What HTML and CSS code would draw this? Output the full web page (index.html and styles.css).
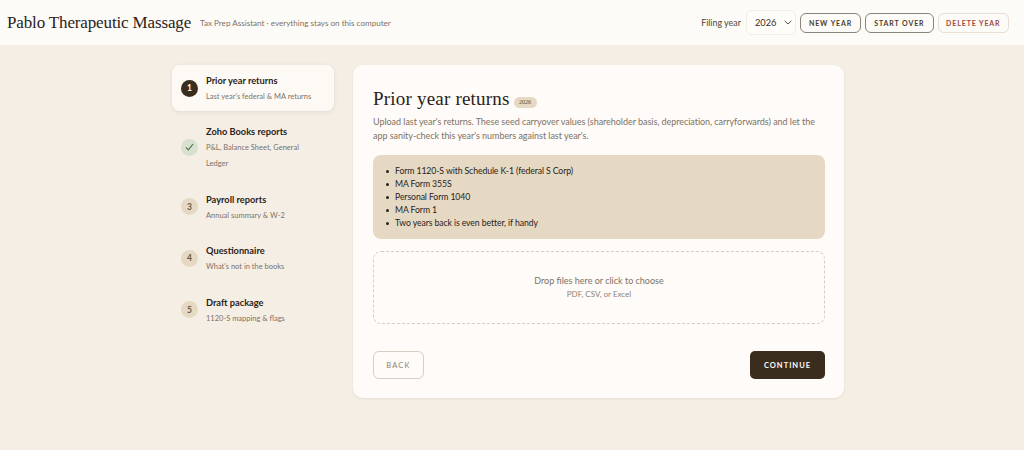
FILE: index.html
```html
<!DOCTYPE html>
<html>
<head>
    <title>Pablo Therapeutic Massage</title>
    <link rel="stylesheet" href="styles.css">
</head>
<body>
    <header class="topbar">
        <div class="brand">
            <span class="brand-name">Pablo Therapeutic Massage</span>
            <span class="brand-sub">Tax Prep Assistant · everything stays on this computer</span>
        </div>
        <div class="year-tools">
            <label class="year-label">Filing year</label>
            <div class="year-select">
                <span>2026</span>
                <svg width="8" height="5" viewBox="0 0 8 5"><path d="M0.7 0.8 L4 4 L7.3 0.8" fill="none" stroke="#5c5247" stroke-width="1"/></svg>
            </div>
            <button class="tool-btn">NEW YEAR</button>
            <button class="tool-btn">START OVER</button>
            <button class="tool-btn danger">DELETE YEAR</button>
        </div>
    </header>

    <main class="layout">
        <nav class="steps">
            <div class="step active">
                <span class="dot current">1</span>
                <div class="step-text">
                    <div class="step-title">Prior year returns</div>
                    <div class="step-sub">Last year's federal &amp; MA returns</div>
                </div>
            </div>
            <div class="step">
                <span class="dot done">
                    <svg width="9" height="8" viewBox="0 0 9 8"><path d="M1 4.4 L3.4 6.8 L8 1" fill="none" stroke="#4f6b4a" stroke-width="1.1"/></svg>
                </span>
                <div class="step-text">
                    <div class="step-title">Zoho Books reports</div>
                    <div class="step-sub">P&amp;L, Balance Sheet, General Ledger</div>
                </div>
            </div>
            <div class="step">
                <span class="dot">3</span>
                <div class="step-text">
                    <div class="step-title">Payroll reports</div>
                    <div class="step-sub">Annual summary &amp; W-2</div>
                </div>
            </div>
            <div class="step">
                <span class="dot">4</span>
                <div class="step-text">
                    <div class="step-title">Questionnaire</div>
                    <div class="step-sub">What's not in the books</div>
                </div>
            </div>
            <div class="step">
                <span class="dot">5</span>
                <div class="step-text">
                    <div class="step-title">Draft package</div>
                    <div class="step-sub">1120-S mapping &amp; flags</div>
                </div>
            </div>
        </nav>

        <section class="card">
            <h1 class="card-title">Prior year returns <span class="year-pill">2026</span></h1>
            <p class="intro">Upload last year's returns. These seed carryover values (shareholder basis, depreciation, carryforwards) and let the app sanity-check this year's numbers against last year's.</p>
            <ul class="doc-list">
                <li>Form 1120-S with Schedule K-1 (federal S Corp)</li>
                <li>MA Form 355S</li>
                <li>Personal Form 1040</li>
                <li>MA Form 1</li>
                <li>Two years back is even better, if handy</li>
            </ul>
            <div class="dropzone">
                <div class="drop-main">Drop files here or click to choose</div>
                <div class="drop-sub">PDF, CSV, or Excel</div>
            </div>
            <div class="actions">
                <button class="back-btn">BACK</button>
                <button class="next-btn">CONTINUE</button>
            </div>
        </section>
    </main>
</body>
</html>
```

FILE: styles.css
```css
* {
    box-sizing: border-box;
}

body {
    margin: 0;
    height: 450px;
    overflow: hidden;
    background-color: #f5eee5;
    color: #2a2219;
    font-family: "Lato", sans-serif;
}

.topbar {
    display: flex;
    justify-content: space-between;
    align-items: center;
    height: 45px;
    padding: 0 15px 0 7px;
    background-color: #fdfbf7;
}

.brand {
    display: flex;
    align-items: center;
    gap: 9px;
}

.brand-name {
    font-family: "Liberation Serif", serif;
    font-size: 17px;
    letter-spacing: -0.14px;
    color: #2a2219;
}

.brand-sub {
    font-size: 8.1px;
    color: #7d7265;
}

.year-tools {
    display: flex;
    align-items: center;
    gap: 4px;
}

.year-label {
    font-size: 8.9px;
    color: #4f463b;
    margin-right: 1px;
}

.year-select {
    display: flex;
    align-items: center;
    justify-content: space-between;
    width: 50px;
    height: 25px;
    padding: 0 3px 0 8px;
    background-color: #fffdfa;
    border: 1px solid #f3ede4;
    border-radius: 6px;
    font-size: 9.3px;
    color: #3a2e20;
}

.tool-btn {
    height: 20px;
    padding: 0 8px;
    background: none;
    border: 1px solid #8a8378;
    border-radius: 6px;
    font-family: inherit;
    font-size: 7px;
    font-weight: 700;
    letter-spacing: 0.9px;
    color: #4a3d2e;
}

.tool-btn.danger {
    padding: 0 7.5px;
    border-color: #eaddd2;
    color: #a0483c;
}

.layout {
    display: flex;
    justify-content: center;
    align-items: flex-start;
    gap: 19px;
    padding: 20px 8px 0 0;
}

.steps {
    display: flex;
    flex-direction: column;
    width: 162px;
}

.step {
    display: flex;
    align-items: center;
    gap: 8px;
    padding: 6px 9px;
    margin-bottom: 5.4px;
    border-radius: 8px;
}

.step.active {
    background-color: #fdfaf6;
    box-shadow: 0 1px 4px rgba(60, 45, 25, 0.1);
}

.dot {
    display: flex;
    align-items: center;
    justify-content: center;
    flex: none;
    width: 17px;
    height: 17px;
    border-radius: 50%;
    background-color: #e5d9c4;
    color: #6b5a40;
    font-size: 8.5px;
    font-weight: 700;
}

.dot.current {
    background-color: #3b2d1e;
    color: #fdfbf7;
}

.dot.done {
    background-color: #d8e0cf;
}

.step-text {
    width: 110px;
    padding-top: 2px;
}

.step-title {
    font-size: 9.25px;
    font-weight: 700;
    color: #2a2219;
    line-height: 16px;
}

.step-sub {
    font-size: 7.5px;
    color: #7d7265;
    line-height: 16px;
}

.card {
    width: 491px;
    height: 333px;
    padding: 21px 19px 20px 20px;
    background-color: #fefbf8;
    border-radius: 10px;
    box-shadow: 0 1px 3px rgba(60, 45, 25, 0.08);
}

.card-title {
    margin: 0;
    font-family: "Liberation Serif", serif;
    font-size: 19px;
    font-weight: 400;
    letter-spacing: 0.2px;
    line-height: 26px;
    color: #2a2219;
}

.year-pill {
    display: inline-block;
    vertical-align: 1px;
    margin-left: -1px;
    padding: 0 5.5px;
    background-color: #e5d9c4;
    border-radius: 7px;
    font-size: 6px;
    line-height: 11px;
    letter-spacing: 0;
    color: #5c4c36;
}

.intro {
    margin: 3px 0 0;
    font-size: 9px;
    letter-spacing: -0.04px;
    line-height: 14.4px;
    color: #7d7265;
}

.doc-list {
    margin: 11px 0 0;
    height: 84px;
    padding: 9px 0 0 22px;
    background-color: #e5d9c4;
    border-radius: 8px;
    font-size: 8.7px;
    letter-spacing: -0.1px;
    line-height: 13px;
    color: #2a2219;
    list-style: none;
}

.doc-list li::before {
    content: "";
    display: inline-block;
    width: 3px;
    height: 3px;
    margin: 0 6px 1px -9px;
    border-radius: 50%;
    background-color: #2a2219;
    vertical-align: middle;
}

.dropzone {
    display: flex;
    flex-direction: column;
    justify-content: center;
    align-items: center;
    height: 73.5px;
    margin-top: 12px;
    border: 1px dashed #d4cec4;
    border-radius: 8px;
}

.drop-main {
    font-size: 9px;
    line-height: 14px;
    color: #7d7265;
}

.drop-sub {
    font-size: 8px;
    line-height: 13px;
    color: #8d8376;
}

.actions {
    display: flex;
    justify-content: space-between;
    margin-top: 27px;
}

.back-btn {
    width: 51px;
    height: 28px;
    background: none;
    border: 1px solid #d4cec4;
    border-radius: 6px;
    font-family: inherit;
    font-size: 7.5px;
    font-weight: 400;
    letter-spacing: 1.2px;
    color: #8d8376;
}

.next-btn {
    width: 75px;
    height: 28px;
    background-color: #3b2d1e;
    border: none;
    border-radius: 5px;
    font-family: inherit;
    font-size: 7.5px;
    font-weight: 700;
    letter-spacing: 1px;
    color: #fdfbf7;
}
```
